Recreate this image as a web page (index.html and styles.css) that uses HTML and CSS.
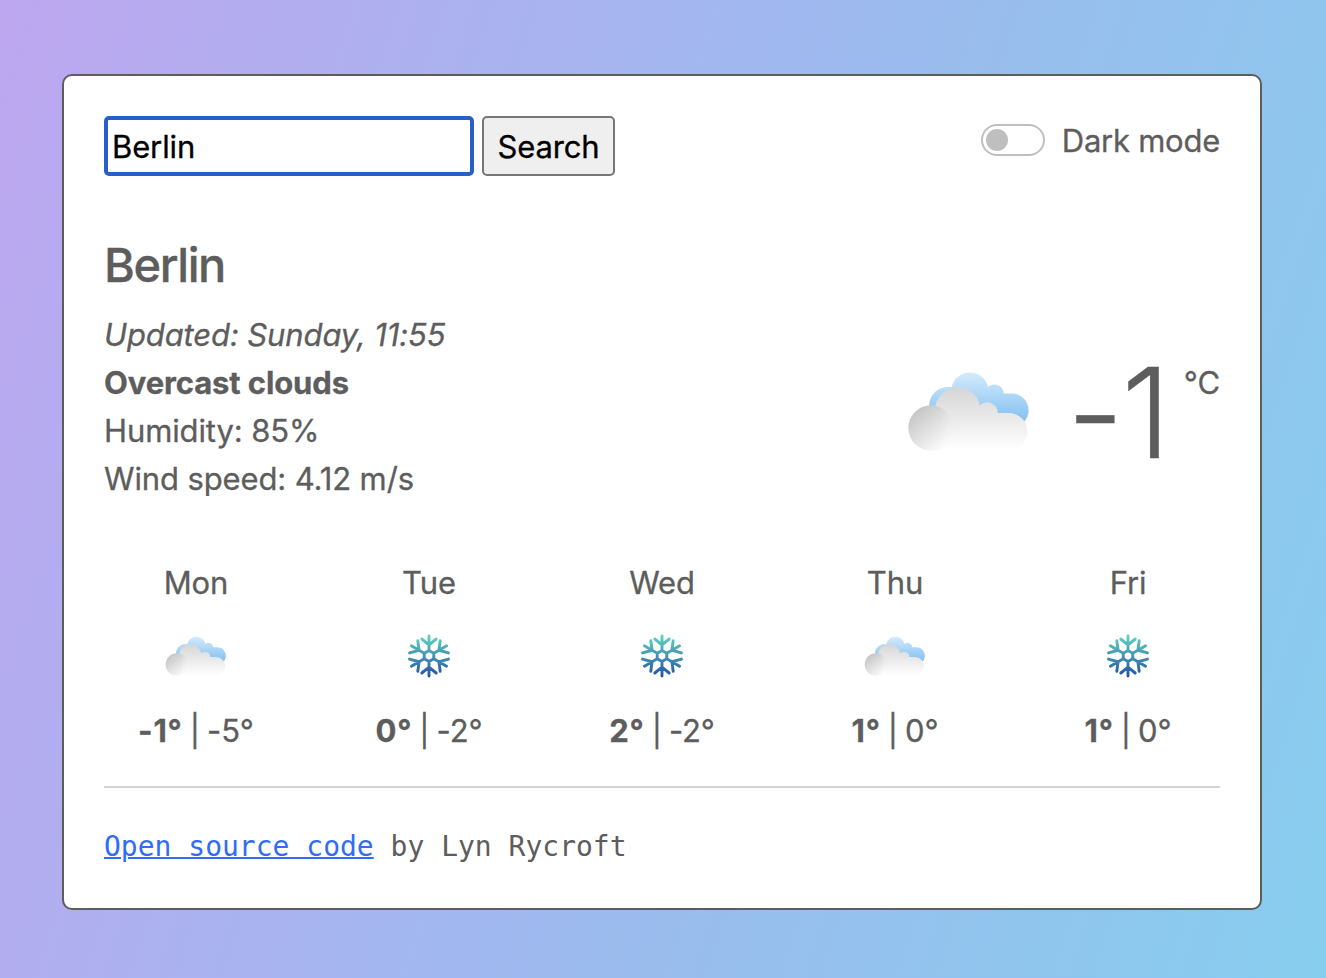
FILE: index.html
```html
<!DOCTYPE html>
<html lang="en">
<head>
<meta charset="utf-8">
<title>Weather</title>
<link rel="stylesheet" href="styles.css">
</head>
<body>
<svg class="defs" aria-hidden="true">
  <defs>
    <linearGradient id="sky" gradientUnits="userSpaceOnUse" x1="0" y1="24" x2="0" y2="76"><stop offset="0" stop-color="#d3eafc"/><stop offset="1" stop-color="#7dbdf0"/></linearGradient>
    <linearGradient id="fog" gradientUnits="userSpaceOnUse" x1="0" y1="39" x2="0" y2="101"><stop offset="0" stop-color="#d6d6d6"/><stop offset="1" stop-color="#fff"/></linearGradient>
    <linearGradient id="puff" gradientUnits="userSpaceOnUse" x1="12" y1="61" x2="40" y2="97"><stop offset="0" stop-color="#c6c6c6"/><stop offset="1" stop-color="#fbfbfb"/></linearGradient>
    <linearGradient id="fade" gradientUnits="userSpaceOnUse" x1="36" y1="0" x2="52" y2="0"><stop offset="0" stop-color="#fff"/><stop offset="1" stop-color="#fff" stop-opacity="0"/></linearGradient>
    <mask id="soft"><rect width="128" height="128" fill="url(#fade)"/></mask>
    <linearGradient id="ice" gradientUnits="userSpaceOnUse" x1="0" y1="-21" x2="0" y2="21"><stop offset="0" stop-color="#5fd6c0"/><stop offset="1" stop-color="#2451a6"/></linearGradient>
    <symbol id="clouds" viewBox="0 0 128 128">
      <path fill="url(#sky)" d="M24 57A19 19 0 0 1 46.500 38.300A18.700 18.700 0 0 1 83 38A9.500 9.500 0 0 1 98.700 44.400H107A17 17 0 0 1 119 73L100 80H45Z"/>
      <path fill="url(#fog)" d="M30 60A22.800 22.800 0 0 1 75 56.300A10.500 10.500 0 0 1 92.700 64H104A18.500 18.500 0 0 1 104 101H26Z"/>
      <circle fill="url(#puff)" cx="26" cy="79" r="22.700" mask="url(#soft)"/>
    </symbol>
    <symbol id="snow" viewBox="-32 -32 64 64">
      <path fill="none" stroke="url(#ice)" stroke-width="2.900" stroke-linecap="round" stroke-linejoin="round" d="M0-5.500L4.760-2.750V2.750L0 5.500L-4.760 2.750V-2.750Z
      M0-5.500V-20M-7.200-17L0-11.200L7.200-17
      M0 5.500V20M-7.200 17L0 11.200L7.200 17
      M4.760-2.750L17.600-10.150M11.200-15.300L9.900-5.750L19.500-3.100
      M4.760 2.750L17.600 10.150M11.200 15.300L9.900 5.750L19.500 3.100
      M-4.760-2.750L-17.600-10.150M-11.200-15.300L-9.900-5.750L-19.500-3.100
      M-4.760 2.750L-17.600 10.150M-11.200 15.300L-9.900 5.750L-19.500 3.100"/>
    </symbol>
  </defs>
</svg>
<main class="card">
  <header class="top">
    <form class="search">
      <input class="search-input" type="text" value="Berlin" aria-label="City">
      <button class="search-button" type="button">Search</button>
    </form>
    <label class="mode"><span class="switch"></span><span class="mode-label">Dark mode</span></label>
  </header>
  <h1 class="city">Berlin</h1>
  <section class="current">
    <ul class="details">
      <li><em class="updated">Updated: Sunday, 11:55</em></li>
      <li><strong class="sky">Overcast clouds</strong></li>
      <li><span class="humidity">Humidity: 85%</span></li>
      <li><span class="wind">Wind speed: 4.12 m/s</span></li>
    </ul>
    <div class="now">
      <svg class="now-icon"><use href="#clouds"/></svg>
      <span class="temp">-1</span>
      <span class="unit">°C</span>
    </div>
  </section>
  <section class="forecast">
    <div class="day"><span class="name">Mon</span><svg class="icon cloudy"><use href="#clouds"/></svg><span class="range"><b>-1°</b> | -5°</span></div>
    <div class="day"><span class="name">Tue</span><svg class="icon"><use href="#snow"/></svg><span class="range"><b>0°</b> | -2°</span></div>
    <div class="day"><span class="name">Wed</span><svg class="icon"><use href="#snow"/></svg><span class="range"><b>2°</b> | -2°</span></div>
    <div class="day"><span class="name">Thu</span><svg class="icon cloudy"><use href="#clouds"/></svg><span class="range"><b>1°</b> | 0°</span></div>
    <div class="day"><span class="name">Fri</span><svg class="icon"><use href="#snow"/></svg><span class="range"><b>1°</b> | 0°</span></div>
  </section>
  <footer class="foot"><a class="link" href="#">Open source code</a> by Lyn Rycroft</footer>
</main>
</body>
</html>
```
FILE: styles.css
```css
* { box-sizing: border-box; }
body {
  margin: 0;
  height: 978px;
  padding: 74px 64px 0 62px;
  overflow: hidden;
  background: linear-gradient(108deg, #bda7f0, #a2b7f0 45%, #9bbbed 56%, #87cdee);
  color: #5d5d5d;
  font-family: Inter, "Liberation Sans", sans-serif;
  font-size: 31px;
  letter-spacing: -0.12px;
  line-height: 48px;
  -webkit-text-stroke: 0.3px;
}
.defs { position: absolute; width: 0; height: 0; }
.card {
  height: 836px;
  padding: 40px;
  border: 2px solid #5d5d5d;
  border-radius: 10px;
  background: #fff;
}
.top { display: flex; justify-content: space-between; align-items: flex-start; }
.search { display: flex; gap: 8px; }
.search-input, .search-button { height: 60px; margin: 0; font: inherit; letter-spacing: inherit; color: #000; border-radius: 5px; }
.search-input { width: 370px; padding: 0 4px; border: 4px solid #285fcb; outline: none; background: #fff; }
.search-button { width: 133px; padding: 2px 0 0; border: 2px solid #767676; background: #efefef; }
.mode { display: flex; align-items: center; gap: 17px; }
.mode-label { padding-top: 1px; margin-bottom: -1px; letter-spacing: -0.25px; }
.switch { width: 64px; height: 32px; padding: 3px; border: 2px solid #bfbfbf; border-radius: 16px; display: block; }
.switch::before { content: ""; display: block; width: 22px; height: 22px; border-radius: 50%; background: #bfbfbf; }
.city { margin: 61px 0 18px; font-size: 47px; line-height: 56px; font-weight: 500; letter-spacing: -1.4px; }
.current { display: flex; justify-content: space-between; height: 192px; }
.details { list-style: none; margin: 0; padding: 0; }
.now { display: flex; align-items: flex-start; }
.now-icon { width: 128px; height: 128px; margin: 38px 34px 0 0; }
.temp { font-size: 125px; line-height: 150px; font-weight: 300; letter-spacing: -2px; margin-top: 27px; }
.unit { margin: 48px 0 0 15px; }
.forecast { display: grid; grid-template-columns: repeat(5, 184px); justify-content: space-between; margin-top: 56px; padding-bottom: 31px; border-bottom: 2px solid #d5d5d5; }
.day { display: flex; flex-direction: column; align-items: center; }
.icon { width: 64px; height: 64px; margin: 17px 0 19px; }
.cloudy { transform: translate(0, 1px); }
.range { word-spacing: -1.5px; }
.range b { letter-spacing: 0.8px; }
.foot { margin-top: 35px; font-family: "DejaVu Sans Mono", monospace; font-size: 28px; letter-spacing: 0; white-space: pre; -webkit-text-stroke: 0; }
.link { color: #2f6df6; text-decoration-thickness: 2px; }
```
